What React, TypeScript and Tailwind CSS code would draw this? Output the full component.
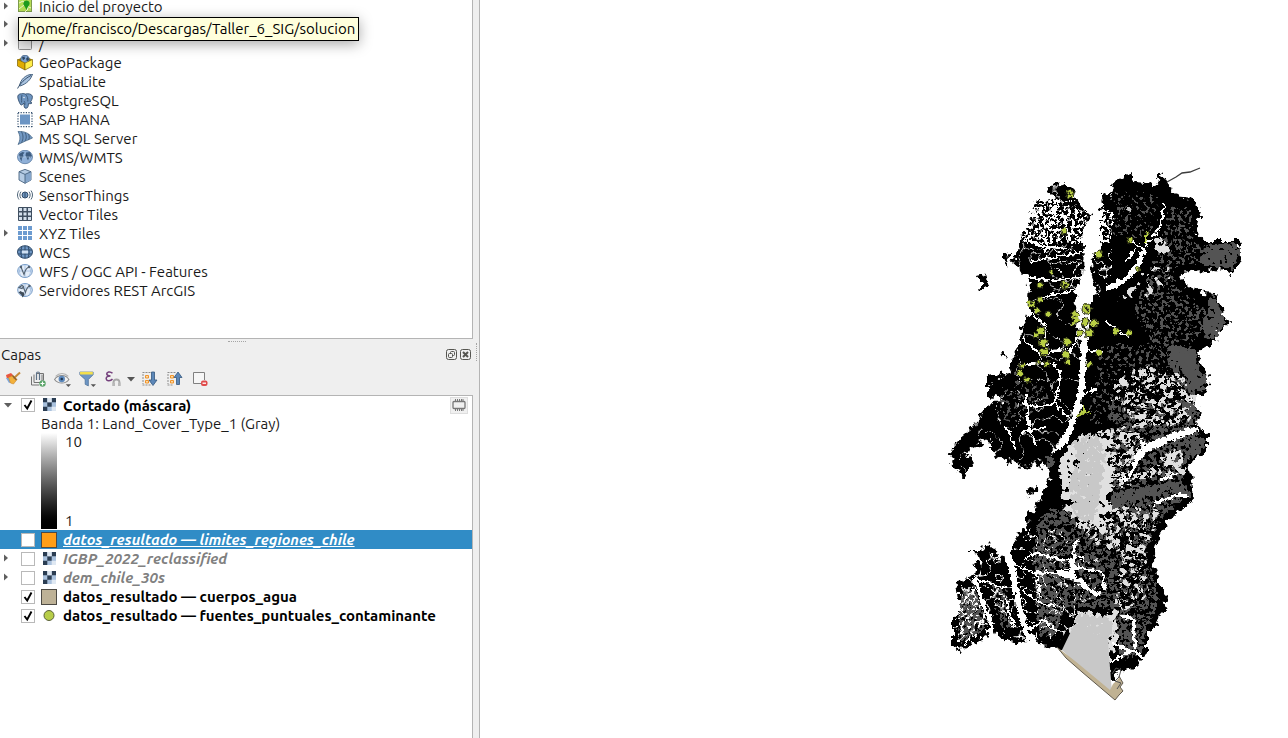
import type { ReactNode } from "react";

/* ---------- Icons ---------- */

function Icon({ children, size = 16 }: { children: ReactNode; size?: number }) {
  return (
    <svg width={size} height={size} viewBox="0 0 16 16" fill="none" className="block shrink-0" aria-hidden="true">
      {children}
    </svg>
  );
}

const ProjectHomeIcon = () => (
  <Icon>
    <rect x="1.5" y=".5" width="13" height="13" fill="#b5dc55" stroke="#7d9a4d" />
    <path d="M2 5l4-2 5 8-3 3M2 11l5-4 7 3" stroke="#eef5cf" />
    <path d="M9.500 12C8 8 5.800 7 6.500 4.500a3.200 3.200 0 016 0c.6 2.500-1.800 3.500-3 7.500z" fill="#1e9a1e" />
  </Icon>
);
const FolderIcon = () => (
  <Icon>
    <path d="M2 2.500h4l1 1.500h7v9.500H2z" fill="#ededed" stroke="#8f8f8f" />
  </Icon>
);
const DriveIcon = () => (
  <Icon>
    <rect x="1.500" y="1.500" width="13" height="12" rx="1" fill="#efefef" stroke="#8f8f8f" />
  </Icon>
);
const GeoPackageIcon = () => (
  <Icon>
    <path d="M.5 4.500L8 1.500l7.500 3L8 8.500z" fill="#a07d00" />
    <circle cx="8" cy="4.300" r="4.200" fill="#7fa3cf" stroke="#35506f" strokeWidth=".7" />
    <path d="M5 2.300l2.500-.8L8 3.800 6 5.300zM9 3.800l2-2 1 3-2 1.500z" fill="#2c4663" />
    <path d="M.5 4.500L8 8v7L.5 11z" fill="#e0ac00" stroke="#7d6200" strokeWidth=".7" />
    <path d="M15.500 4.500L8 8v7l7.500-4z" fill="#ffee4a" stroke="#7d6200" strokeWidth=".7" />
  </Icon>
);
const FeatherIcon = () => (
  <Icon>
    <path d="M2.500 12C3.500 5.500 8 1 15.500 0 14 5.500 9.500 10 3 12z" fill="#a9c3e0" stroke="#3b5876" strokeWidth=".9" />
    <path d="M.6 14.500C3 9.500 8 4.500 14 1.500" stroke="#314c69" />
  </Icon>
);
const PostgresIcon = () => (
  <Icon>
    <path d="M4.500.8c2-.6 3 0 4 .3 2-.7 6-.5 6.800 2 .5 2-.8 4.500-2 6l1.700.8c-1.200 1-2.500.9-3.500.6-.3 2-.2 4.500-2.300 4.700-2 .3-2.300-1.500-2.200-5C5.500 11 4.500 13 3.500 11.500 2 9 .5 5 .8 3.200 1.200 1.300 3 .8 4.500.8z" fill="#6e94bf" stroke="#35506f" strokeWidth=".9" />
    <path d="M5 2C4 5 5 7 4.500 9.500M8.500 1.500c2 1.500 2.500 4 2.300 7M7 8c1 1 1 2 .8 4" stroke="#35506f" strokeWidth=".8" />
    <circle cx="7" cy="4.500" r=".7" fill="#fff" />
  </Icon>
);
const HanaIcon = () => (
  <Icon>
    <rect x="3" y="2.500" width="10" height="10" fill="#6c95c4" />
    <path d="M1 .6h14.500M1 14.600h14.500M1 1v14M15 1v14" stroke="#35506f" strokeWidth="1.200" strokeDasharray="1.200 1.400" />
  </Icon>
);
const MssqlIcon = () => (
  <Icon>
    <path d="M1 .5C7 0 12 2 15.500 7 11 9 6 11 1 13.500 3.500 9 3.500 5 1 .5z" fill="#7399c4" stroke="#42617f" strokeWidth=".7" />
    <path d="M4.500.7c2 4 2 7 0 11M8 1.500c1.700 3 1.700 6 0 8.600M11.500 3c1 2.500 1 4 0 5.700" stroke="#35506f" strokeWidth=".8" />
  </Icon>
);
const GlobeIcon = () => (
  <Icon>
    <ellipse cx="8" cy="7" rx="7.500" ry="6.700" fill="#8fb0d8" stroke="#5a7ba1" strokeWidth=".8" />
    <path d="M2 4l3.500-2 2 .5L6 4.500l.5 2L5 8l-.5 3.500L3 8.500zM9 2.500l4-.5 2 4-1.500 2-1-1.500-1.500 4-1.500-3L8.500 5.500z" fill="#3d5c80" />
    <path d="M1 7h14" stroke="#c6d9ee" strokeWidth=".5" />
  </Icon>
);
const CubeIcon = () => (
  <Icon>
    <path d="M8 .4l6 2.300v8.300L8 14.300 2 11V2.700z" fill="#b5cbe3" stroke="#46627f" strokeWidth=".9" />
    <path d="M8 5.400l6-2.700V11l-6 3.300z" fill="#86a6cb" />
    <path d="M2 2.700l6 2.700 6-2.700M8 5.400v9" stroke="#46627f" strokeWidth=".9" />
  </Icon>
);
const SensorIcon = () => (
  <Icon>
    <circle cx="8" cy="7" r="3" fill="#6e94bf" stroke="#314c69" />
    <path d="M8 4.500v5" stroke="#314c69" />
    <path d="M4 3.700c-1.500 2-1.500 4.600 0 6.600M2 2.500c-2 2.800-2 6.200 0 9M12 3.700c1.500 2 1.500 4.600 0 6.600M14 2.500c2 2.800 2 6.200 0 9" stroke="#4f6579" />
  </Icon>
);
const VectorTilesIcon = () => (
  <Icon>
    <rect x="1" y="0" width="14" height="14" rx="1" fill="#3f4f61" />
    {[2, 6.5, 11].map((x) => [1, 5.5, 10].map((y) => <rect key={`${x}-${y}`} x={x} y={y} width="3" height="3" fill="#d3dfec" />))}
  </Icon>
);
const XyzIcon = () => (
  <Icon>
    {[1, 6, 11].map((x) => [0, 5, 10].map((y) => <rect key={`${x}-${y}`} x={x} y={y} width="4" height="4" fill="#6c9bd0" />))}
  </Icon>
);
const WcsIcon = () => (
  <Icon>
    <ellipse cx="8" cy="7" rx="7.500" ry="6.300" fill="#6f97c5" stroke="#2f4a68" />
    <path d="M1 5h14M1 9h14M8 1v12M5 1.500c-1.500 3.500-1.500 7.500 0 11M11 1.500c1.500 3.500 1.500 7.500 0 11" stroke="#2f4a68" />
    <rect x="5" y="5.500" width="6" height="3" fill="#cfe0f2" />
  </Icon>
);
const WfsIcon = () => (
  <Icon>
    <ellipse cx="8" cy="7" rx="7.300" ry="6.500" fill="#e4edf8" stroke="#6f97c5" />
    <path d="M1 7h14M8 .5v13M4 2c-2 3-2 7 0 10M12 2c2 3 2 7 0 10" stroke="#9dbbe0" strokeWidth=".8" />
    <path d="M4 3l3 7.500c1-4 2-6.500 5-7.500" stroke="#51606f" strokeWidth="1.100" />
    <circle cx="4" cy="3" r="1.200" fill="#51606f" />
    <circle cx="12" cy="3" r="1.200" fill="#51606f" />
  </Icon>
);
const ArcgisIcon = () => (
  <Icon>
    <ellipse cx="8" cy="7" rx="7.300" ry="6.500" fill="#e4edf8" stroke="#6f97c5" />
    <path d="M2 5h13M8 .5v13M12 2c2 3 2 7 0 10" stroke="#9dbbe0" strokeWidth=".8" />
    <path d="M2 4.500l3-2 1.500 1-1.500 2zM6 3.500l2.500 6c.8-3.500 2-5.500 4-6.500" stroke="#51606f" strokeWidth="1.100" />
    <circle cx="12.500" cy="3" r="1.200" fill="#51606f" />
    <path d="M1.500 9.500l2-1.500L5 9l2 .5.500 2.500-2 2.500L4.500 12z" fill="#3f4c59" />
  </Icon>
);
const RasterIcon = () => (
  <Icon>
    <rect x="2" y="1" width="13" height="13" fill="#a9c1dd" />
    <path d="M2 1h4.300v4.300H2zM10.700 1H15v4.300h-4.300zM6.300 5.300h4.400v4.400H6.300zM2 9.700h4.300V14H2z" fill="#2b3d52" />
    <path d="M6.300 1h4.400v4.300H6.300zM10.700 9.700H15V14h-4.300z" fill="#dfe8f2" />
  </Icon>
);

const StyleIcon = () => (
  <Icon>
    <path d="M1 4l5-2 2 2-1 3-5 1z" fill="#e9573f" />
    <path d="M1 7h3l3 4-3 1z" fill="#7ba5dc" />
    <path d="M3.500 6.500L8 4.500l4 4L8.500 13l-3-1z" fill="#f3b13b" stroke="#c9852b" strokeWidth=".6" />
    <path d="M8.500 7.500L15 1.500" stroke="#c58b3a" strokeWidth="2" />
    <path d="M7.500 4.500l4 4.500" stroke="#8a6130" strokeWidth="1.300" />
  </Icon>
);
const AddGroupIcon = () => (
  <Icon>
    <path d="M1.500 5.500v8.500h7.500M4 3.500V11.500h8V3.500M6.500 2.500h7v7" stroke="#737373" />
    <path d="M6.500 9V2.500a1.500 1.500 0 013 0V9" stroke="#5f7389" strokeWidth="1.200" />
    <circle cx="12.500" cy="12.500" r="3.200" fill="#5aa469" />
    <path d="M12.500 10.500v4M10.500 12.500h4" stroke="#fff" strokeWidth="1.200" />
  </Icon>
);
const EyeIcon = () => (
  <Icon size={17}>
    <path d="M.5 8C4 3 11 3 14 8c-3 4.500-10 4.500-13.500 0z" fill="#f2f2f2" stroke="#8b8b8b" />
    <path d="M1.500 5C5 1.500 10 1.500 13.500 5" stroke="#b0b0b0" />
    <circle cx="7.300" cy="7.500" r="3" fill="#5e8abd" />
    <circle cx="7.300" cy="7.500" r="1.200" fill="#1f3550" />
    <path d="M11 12.500h5L13.500 15z" fill="#555" />
  </Icon>
);
const FilterIcon = () => (
  <Icon size={17}>
    <path d="M.8 1h12.500v2.500L8.800 8v6l-3-1.500V8L.8 3.500z" fill="#6d96c5" stroke="#4b6e96" strokeWidth=".7" />
    <path d="M1 .8h12v2.500H1z" fill="#f3df4c" />
    <path d="M11 12.500h5L13.500 15z" fill="#555" />
  </Icon>
);
const ExpressionIcon = () => (
  <Icon>
    <path d="M7.500 2.300C5-.2 1.500 1 1.800 3.200 2 4.600 3.300 5 5.500 5 3 5 1 5.800 1.200 7.800 1.500 10.300 5.500 10.500 7.500 8" stroke="#74407c" strokeWidth="1.500" />
    <path d="M8.500 15v-3.500c0-4 6-4 6 0V15" stroke="#a7a7a7" strokeWidth="1.800" />
    <path d="M7.500 11.500h2.500V15H7.500zM13 11.500h2.500V15H13z" fill="#b8b8b8" />
  </Icon>
);
const ExpandIcon = () => (
  <Icon>
    <path d="M.5 1.500h9M.5 14h9M1 3v10" stroke="#8d8d8d" strokeDasharray="2 1" />
    <path d="M3.500 4.500h3v2.500h-3zM3.500 9.500h3V12h-3z" stroke="#f0952c" fill="#fbd9a8" />
    <path d="M9.500 1h3v8H15l-4 5.500L7 9h2.500z" fill="#5c87b8" stroke="#35587f" strokeWidth=".8" />
  </Icon>
);
const CollapseIcon = () => (
  <Icon>
    <path d="M.5 1.500h9M.5 14h6M1 3v10" stroke="#8d8d8d" strokeDasharray="2 1" />
    <path d="M3.500 4.500h3v2.500h-3zM3.500 9.500h3V12h-3z" stroke="#f0952c" fill="#fbd9a8" />
    <path d="M9.500 13.500h3V6.500H15L11 1 7 6.500h2.500z" fill="#5c87b8" stroke="#35587f" strokeWidth=".8" />
  </Icon>
);
const RemoveIcon = () => (
  <Icon>
    <path d="M9 12.500H1.500v-11h11v7.500" fill="#f6f6f6" stroke="#808080" />
    <rect x="9" y="9.500" width="6.500" height="5.500" rx="2" fill="#e04b4b" />
    <path d="M10.500 12.200H14" stroke="#fff" strokeWidth="1.300" />
  </Icon>
);

/* ---------- Data ---------- */

const browserItems = [
  { label: "Inicio del proyecto", icon: <ProjectHomeIcon />, expandable: true, first: true },
  { label: "Inicio", icon: <FolderIcon />, expandable: true, covered: true },
  { label: "/", icon: <DriveIcon />, expandable: true },
  { label: "GeoPackage", icon: <GeoPackageIcon /> },
  { label: "SpatiaLite", icon: <FeatherIcon /> },
  { label: "PostgreSQL", icon: <PostgresIcon /> },
  { label: "SAP HANA", icon: <HanaIcon /> },
  { label: "MS SQL Server", icon: <MssqlIcon /> },
  { label: "WMS/WMTS", icon: <GlobeIcon /> },
  { label: "Scenes", icon: <CubeIcon /> },
  { label: "SensorThings", icon: <SensorIcon /> },
  { label: "Vector Tiles", icon: <VectorTilesIcon /> },
  { label: "XYZ Tiles", icon: <XyzIcon />, expandable: true },
  { label: "WCS", icon: <WcsIcon /> },
  { label: "WFS / OGC API - Features", icon: <WfsIcon /> },
  { label: "Servidores REST ArcGIS", icon: <ArcgisIcon /> },
];

const swatch = (color: string) => (
  <Icon>
    <rect x=".5" y=".5" width="15" height="15" fill={color} stroke="#4d4a44" />
  </Icon>
);

type Layer = { name: string; checked: boolean; icon: ReactNode; tone: string; row?: string; expandable?: boolean };

const layers: Layer[] = [
  { name: "datos_resultado — limites_regiones_chile", checked: false, icon: swatch("#ff9e17"), tone: "italic text-white underline", row: "bg-[#308cc6]" },
  { name: "IGBP_2022_reclassified", checked: false, icon: <RasterIcon />, tone: "italic text-[#808080]", expandable: true },
  { name: "dem_chile_30s", checked: false, icon: <RasterIcon />, tone: "italic text-[#808080]", expandable: true },
  { name: "datos_resultado — cuerpos_agua", checked: true, icon: swatch("#beb297"), tone: "text-black" },
  {
    name: "datos_resultado — fuentes_puntuales_contaminante",
    checked: true,
    icon: (
      <Icon>
        <circle cx="8" cy="7.500" r="5" fill="#b7cd48" stroke="#5a6138" />
      </Icon>
    ),
    tone: "text-black",
  },
];

const tools = [
  { label: "Abrir el panel de estilo", icon: <StyleIcon /> },
  { label: "Añadir grupo", icon: <AddGroupIcon /> },
  { label: "Administrar temas de mapa", icon: <EyeIcon /> },
  { label: "Filtrar leyenda", icon: <FilterIcon /> },
  { label: "Filtrar por expresión", icon: <ExpressionIcon /> },
];
const treeTools = [
  { label: "Expandir todo", icon: <ExpandIcon /> },
  { label: "Contraer todo", icon: <CollapseIcon /> },
  { label: "Eliminar capa", icon: <RemoveIcon /> },
];

/* ---------- Tree parts ---------- */

function Expander({ visible, open = false, label }: { visible?: boolean; open?: boolean; label: string }) {
  if (!visible) return <span className="w-4 shrink-0" />;
  return (
    <button type="button" aria-label={label} aria-expanded={open} className="flex h-3 w-4 shrink-0 items-center pl-[3px]">
      <svg width="10" height="9" viewBox="0 0 10 9" aria-hidden="true">
        <path d={open ? "M1 2h8L5 6.500z" : "M1 .5v7L5 4z"} fill="#5f5f5f" />
      </svg>
    </button>
  );
}

function Tick({ id, checked }: { id: string; checked: boolean }) {
  return (
    <span className="grid h-[14px] w-[14px] shrink-0">
      <input id={id} type="checkbox" defaultChecked={checked} className="peer col-start-1 row-start-1 h-[14px] w-[14px] appearance-none border border-[#b9b9b9] bg-white" />
      <svg viewBox="0 0 14 14" className="pointer-events-none invisible col-start-1 row-start-1 peer-checked:visible" aria-hidden="true">
        <path d="M3.500 7l2.700 3.500 4.300-8" fill="none" stroke="#000" strokeWidth="1.900" />
      </svg>
    </span>
  );
}

/* ---------- Map ---------- */

function rgb(hex: string) {
  return [1, 3, 5].map((i) => parseInt(hex.slice(i, i + 2), 16) / 255);
}
function alphaTo(hex: string, gain: number, offset: number) {
  const [r, g, b] = rgb(hex);
  return `0 0 0 0 ${r} 0 0 0 0 ${g} 0 0 0 0 ${b} 0 0 0 ${gain} ${offset}`;
}
const region = { filterUnits: "userSpaceOnUse" as const, x: 930, y: 150, width: 340, height: 570, colorInterpolationFilters: "sRGB" };

/* Fills a shape with hard-edged noise; the shape's opacity sets the density. */
function Speckle({ id, color, freq, seed, blur = 2 }: { id: string; color: string; freq: string; seed: number; blur?: number }) {
  return (
    <filter id={id} {...region}>
      <feTurbulence type="fractalNoise" baseFrequency={freq} numOctaves={3} seed={seed} />
      <feColorMatrix values={alphaTo("#000000", 1, 0)} result="noise" />
      <feGaussianBlur in="SourceAlpha" stdDeviation={blur} result="shape" />
      <feComposite in="noise" in2="shape" operator="arithmetic" k1={0} k2={0.5} k3={0.5} k4={0} />
      <feColorMatrix values={alphaTo(color, 60, -36)} />
    </filter>
  );
}

/* Draws thin meandering lines inside a shape. */
function Veins({ id, color, freq, seed, width }: { id: string; color: string; freq: string; seed: number; width: number }) {
  return (
    <filter id={id} {...region}>
      <feTurbulence type="turbulence" baseFrequency={freq} numOctaves={1} seed={seed} />
      <feColorMatrix values={alphaTo(color, -30, width)} result="lines" />
      <feTurbulence type="fractalNoise" baseFrequency=".25" numOctaves={2} seed={seed + 1} result="wobble" />
      <feDisplacementMap in="lines" in2="wobble" scale={5} xChannelSelector="R" yChannelSelector="G" />
      <feComposite in2="SourceAlpha" operator="in" />
    </filter>
  );
}

function Rough({ id, scale, freq, seed }: { id: string; scale: number; freq: string; seed: number }) {
  return (
    <filter id={id} {...region}>
      <feTurbulence type="fractalNoise" baseFrequency={freq} numOctaves={3} seed={seed} result="wobble" />
      <feDisplacementMap in="SourceGraphic" in2="wobble" scale={scale} xChannelSelector="R" yChannelSelector="A" />
    </filter>
  );
}

const westNorth =
  "1046,190 1050,186 1065,183 1074,192 1078,203 1090,215 1084,225 1083,243 1082,277 1074,290 1077,303 1074,316 1078,332 1083,345 1081,380 1077,413 1067,433 1055,447 1050,457 1035,466 1020,464 1003,459 990,452 990,440 978,446 966,452 974,466 961,476 950,463 952,445 970,430 983,410 1005,398 987,396 987,377 1010,371 1012,357 1021,345 1022,325 1031,312 1028,300 1029,286 1025,273 1012,262 1020,246 1028,223 1035,203 1054,198";
const east =
  "1103,196 1110,192 1117,180 1132,172 1134,182 1157,184 1160,172 1167,183 1177,197 1195,199 1200,210 1197,230 1203,241 1237,241 1243,253 1232,275 1220,268 1203,271 1181,273 1184,285 1203,293 1215,294 1228,323 1215,334 1218,340 1202,347 1198,363 1208,377 1206,392 1190,399 1202,412 1197,426 1207,434 1207,452 1188,463 1192,487 1193,502 1177,512 1163,527 1153,553 1157,577 1168,600 1157,625 1148,634 1148,654 1133,669 1118,672 1110,682 1057,647 1040,645 1032,633 1023,643 1005,640 992,633 983,640 957,650 953,647 953,620 960,607 957,583 973,577 977,560 1007,557 1014,545 1020,531 1029,528 1026,518 1040,500 1050,478 1042,462 1058,450 1068,436 1078,414 1083,385 1085,350 1086,318 1092,300 1097,290 1092,277 1091,260 1101,247 1101,217";
const islands = [
  "970,551 980,551 986,545 996,547 998,555 985,560 975,554",
  "978,274 985,272 989,285 982,289",
  "1003,252 1009,255 1008,265 1003,261",
  "1027,489 1038,484 1037,489 1028,496",
  "999,352 1006,354 1008,360",
  "1016,463 1030,466 1031,470 1017,468",
];
const greyLobes = [
  "1205,243 1237,241 1243,253 1232,275 1222,268 1207,270 1196,262 1202,252",
  "1205,293 1216,294 1228,323 1215,341 1203,340 1200,322 1208,310",
  "1176,352 1198,349 1200,366 1208,377 1206,392 1198,394 1190,378 1178,366",
  "1180,438 1206,434 1207,450 1190,461 1188,448",
  "1190,399 1202,412 1199,420 1184,408 1168,398",
  "1110,492 1150,484 1178,480 1192,488 1192,500 1170,492 1140,502 1110,512",
  "1012,380 1022,379 1024,388 1016,388",
  "1042,455 1056,455 1056,466 1046,470",
];
const channels: [string, number][] = [
  ["M1086 300L1087 318 1085 335 1083 363 1081 393 1076 411 1068 434 1058 449", 6],
  ["M1107 289L1127 278 1138 265 1144 249", 5],
  ["M1144 249L1162 224 1164 203M1144 249L1130 240M1126 262L1136 249", 2],
  ["M1105 322L1118 330 1129 337M1085 350L1103 352M1083 395L1097 388", 2],
  ["M1135 460L1147 448 1170 438 1197 428", 7],
  ["M1136 458L1133 470 1127 479 1118 480M1140 440L1147 449", 2],
  ["M1154 504L1177 495 1188 496M1160 480L1178 474", 3],
  ["M974 577L983 603 991 622 991 640", 4],
  ["M1007 553L1012 570 1017 593 1022 617 1029 640", 6],
  ["M1013 563L1033 573 1057 573 1073 567 1103 572 1104 590", 2],
  ["M1057 572L1074 577 1087 588 1099 596M1072 560L1072 578", 5],
  ["M1023 560L1037 553 1060 560 1083 558M1074 558L1074 545 1079 540", 2],
  ["M977 580L1007 588M1022 590L1040 603 1055 606M1027 631L1043 620 1058 632M1037 573L1040 595M1006 598L1009 612 1016 627", 2],
  ["M1120 615L1133 619 1135 648M1112 663L1124 654 1135 651 1146 660M1112 643L1133 652", 3],
  ["M1022 403L1033 407 1050 406 1058 396 1060 372 1052 362M1025 395L1030 430 1020 433M1030 430L1045 427M1030 430L1036 446M1006 425L1016 450M1056 403L1068 418", 2],
  ["M1030 262L1050 258 1083 252M1027 277L1055 281 1082 276M1040 298L1074 290M1058 200L1048 225 1045 252M1064 215L1070 240M1027 240L1045 247 1068 248", 2],
  ["M1023 338L1040 355 1068 348M1030 312L1045 325 1048 345M1078 338L1066 356M1020 366L1050 362", 2],
];
const sources: [number, number, number][] = [
  [1070, 194, 4], [1064, 231, 3], [1099, 254, 4], [1130, 240, 3], [1138, 269, 2], [1051, 272, 2], [1040, 285, 3], [1065, 285, 4],
  [1031, 304, 4], [1040, 300, 3], [1048, 314, 3], [1037, 311, 3], [1087, 309, 5], [1075, 315, 4], [1076, 320, 3], [1085, 322, 4],
  [1094, 323, 4], [1041, 331, 4], [1036, 336, 3], [1043, 343, 4], [1044, 352, 4], [1067, 342, 4], [1080, 333, 3], [1089, 333, 4],
  [1116, 331, 3], [1129, 333, 3], [1066, 355, 4], [1068, 362, 3], [1022, 366, 3], [1020, 373, 3], [1047, 364, 3], [1038, 362, 2],
  [1027, 380, 3], [1099, 353, 3], [1089, 364, 3],
];

function MapCanvas() {
  return (
    <svg className="block h-full w-full bg-white" role="img" aria-label="Mapa de cobertura del suelo">
      <defs>
        <Rough id="coast" scale={13} freq=".16" seed={4} />
        <Rough id="edge" scale={7} freq=".2" seed={9} />
        <Rough id="dots" scale={5} freq=".3" seed={14} />
        <Speckle id="grey" color="#545454" freq=".28" seed={3} />
        <Speckle id="solidGrey" color="#545454" freq=".25" seed={8} blur={2} />
        <Speckle id="black" color="#000000" freq=".2" seed={12} />
        <Speckle id="pale" color="#e0e0e0" freq=".15" seed={21} blur={3} />
        <Speckle id="ice" color="#c8c8c8" freq=".22" seed={31} blur={3} />
        <Speckle id="water" color="#ffffff" freq=".28" seed={41} blur={1} />
        <Veins id="fjords" color="#ffffff" freq=".05" seed={6} width={0.8} />
        <Veins id="creeks" color="#ffffff" freq=".08" seed={16} width={1.2} />
        <Veins id="ridges" color="#000000" freq=".1 .09" seed={26} width={2.2} />
      </defs>
      <g transform="translate(-480 0)">
        <g filter="url(#coast)">
          <polygon points={westNorth} />
          <polygon points={east} />
          {islands.map((p) => (
            <polygon key={p} points={p} />
          ))}
        </g>

        <g filter="url(#grey)">
          <polygon opacity=".66" points="1165,205 1194,204 1196,240 1226,250 1216,264 1174,270 1180,288 1205,304 1212,323 1196,343 1150,345 1130,310 1148,270 1160,240" />
          <polygon opacity=".62" points="1100,340 1196,345 1196,400 1150,400 1095,430 1085,420 1092,380" />
          <polygon opacity=".78" points="1168,345 1196,348 1202,388 1190,396 1170,380" />
          <polygon opacity=".78" points="1110,400 1196,402 1202,448 1185,468 1188,498 1161,522 1149,555 1162,600 1150,628 1144,654 1120,664 1110,610 1065,610 1058,640 1037,638 1030,560 1036,520 1050,505 1110,520" />
          <polygon opacity=".82" points="960,590 978,588 988,625 980,636 958,645 957,615" />
          <polygon opacity=".68" points="985,575 1008,585 1018,630 1000,632 990,600" />
          <polygon opacity=".62" points="1000,385 1045,380 1055,400 1020,425 990,425" />
          <polygon opacity=".6" points="1110,190 1160,190 1160,240 1110,240" />
        </g>

        <g filter="url(#pale)">
          <polygon opacity=".8" points="1152,238 1163,228 1172,248 1166,258 1152,254" />
          <polygon opacity=".6" points="1150,262 1170,262 1175,285 1130,310 1108,312 1120,290" />
          <polygon opacity=".76" points="1112,374 1150,362 1186,374 1199,400 1192,424 1160,430 1140,425 1110,404" />
          <polygon opacity=".76" points="1090,430 1140,420 1150,445 1130,470 1150,465 1170,445 1188,450 1190,480 1150,480 1100,500" />
          <polygon opacity=".72" points="1098,500 1162,505 1160,525 1148,550 1152,590 1132,618 1110,612 1118,560 1070,530" />
          <polygon opacity=".83" points="1068,442 1080,432 1098,432 1110,450 1110,490 1102,520 1082,528 1062,512 1058,478 1054,464" />
          <polygon opacity=".86" points="1072,608 1118,612 1120,640 1110,672 1112,690 1066,650" />
        </g>

        <g filter="url(#black)">
          <polygon opacity=".63" points="1100,365 1190,375 1190,430 1140,425 1100,430" />
          <polygon opacity=".63" points="1110,432 1160,430 1180,470 1160,500 1110,500" />
          <polygon opacity=".64" points="1045,520 1160,515 1152,560 1160,600 1140,640 1116,605 1050,605" />
        </g>
        <polygon filter="url(#ridges)" points="1100,365 1180,365 1194,410 1180,430 1140,440 1130,460 1160,470 1180,480 1160,520 1150,560 1155,600 1140,640 1116,620 1112,530 1110,430 1092,420" />

        <g filter="url(#solidGrey)">
          {greyLobes.map((p) => (
            <polygon key={p} opacity=".88" points={p} />
          ))}
        </g>

        <g filter="url(#ice)">
          <polygon opacity=".92" points="1068,444 1080,434 1097,432 1108,452 1104,486 1096,522 1084,526 1070,512 1066,480 1076,462" />
          <polygon opacity=".95" points="1074,610 1113,616 1116,632 1107,645 1113,668 1112,690 1062,650 1070,632" />
          <polygon opacity="1" points="1122,204 1134,205 1133,213 1123,213" />
          <polygon opacity=".9" points="1105,299 1116,303 1113,312" />
        </g>
        <path d="M1074 625L1108 640 1110 668 1112 692 1080 668 1062 650z" fill="#c8c8c8" />

        <polygon filter="url(#fjords)" points={westNorth} />
        <polygon filter="url(#creeks)" points="1020,200 1090,200 1085,290 1060,290 1045,250 1020,250" />
        <polygon filter="url(#creeks)" points="953,575 1030,528 1060,530 1100,560 1090,600 1060,640 953,650" />
        <polygon filter="url(#creeks)" points="1095,190 1112,190 1112,280 1098,300 1090,290" />
        <g filter="url(#water)">
          <polygon opacity=".67" points="1028,195 1060,198 1088,215 1082,245 1022,245" />
          <polygon opacity=".65" points="1098,205 1116,212 1112,245 1098,245" />
          <polygon opacity=".58" points="955,590 985,585 990,640 955,650" />
        </g>
        <g filter="url(#edge)" fill="none" stroke="#fff" strokeLinejoin="round" shapeRendering="crispEdges">
          {channels.map(([d, w]) => (
            <path key={d} d={d} strokeWidth={w} />
          ))}
        </g>

        <g filter="url(#dots)">
          {sources.map(([x, y, r]) => (
            <circle key={`${x}-${y}`} cx={x} cy={y} r={r} fill="#b9cf45" stroke="#2c3016" strokeWidth="1" />
          ))}
          <path d="M1077 418L1081 413 1090 412M1084 412V405M1146 243V236L1148 232M1072 325L1079 318" fill="none" stroke="#b9cf45" strokeWidth="2" />
          <path d="M1041 334V340M1062 348l3 4M1082 326l4 3M1064 284l2 4M1068 192l3 3M1030 303l3 1M1086 307l2 4" stroke="#1c1f10" strokeWidth="2" />
        </g>

        <path d="M1057 647L1075 661 1110 690 1113 684 1119 678 1119 676 1123 683 1120 687 1123 691 1119 695 1115 700 1082 672 1066 658z" fill="#c0b293" />
        <path d="M1057 647L1066 658 1082 672 1115 700 1119 695 1123 691 1120 687 1123 683 1119 676" fill="none" stroke="#5e584c" />
        <path d="M1112 674l4-6 5 2-2 7-4 4 6 2-4 6" fill="none" stroke="#545454" />
        <path d="M1167 182L1176 177 1182 173 1190 172 1200 168" fill="none" stroke="#3c3c3c" strokeWidth="1.300" />
      </g>
    </svg>
  );
}

/* ---------- Page ---------- */

export default function App() {
  return (
    <div className="flex h-screen min-h-[640px] w-full overflow-hidden bg-[#efefef] font-['Ubuntu','Noto_Sans',sans-serif] text-[15px] leading-[19px] text-[#1a1a1a]">
      <aside className="relative flex w-[473px] shrink-0 flex-col">
        <section aria-label="Navegador" className="h-[339px] shrink-0 overflow-hidden border-r border-b border-[#b4b4b4] bg-white">
          <ul>
            {browserItems.map((item) => (
              <li key={item.label} className={item.first ? "flex h-[15px] items-start leading-[13px]" : "flex h-[19px] items-center"}>
                <Expander visible={item.expandable} label={`Expandir ${item.label}`} />
                <span className={item.first ? "-mt-[2px] ml-px" : "ml-px"}>{item.icon}</span>
                {!item.covered && <span className="ml-[6px] whitespace-nowrap">{item.label}</span>}
              </li>
            ))}
          </ul>
        </section>
        <div role="tooltip" className="absolute top-[17px] left-[18px] flex h-[24px] items-start border border-black bg-[#ffffdc] px-[3px] pt-px whitespace-nowrap text-black shadow-[0_3px_14px_rgba(0,0,0,0.35)]">
          /home/francisco/Descargas/Taller_6_SIG/solucion
        </div>

        <div className="flex h-[6px] justify-center" aria-hidden="true">
          <span className="mt-[2px] h-px w-[18px] border-t border-dotted border-[#a5a5a5]" />
        </div>

        <header className="flex h-[19px] items-center gap-[3px] pr-[2px] pl-px">
          <h2 className="flex-1">Capas</h2>
          <button type="button" aria-label="Panel flotante">
            <svg width="11" height="11" viewBox="0 0 11 11" fill="none" stroke="#555550" aria-hidden="true">
              <rect x=".5" y=".5" width="10" height="10" rx="2" />
              <rect x="4.500" y="2.500" width="4" height="4" rx="1" />
              <rect x="2.500" y="4.500" width="4" height="4" rx="1" fill="#efefef" />
            </svg>
          </button>
          <button type="button" aria-label="Cerrar panel">
            <svg width="11" height="11" viewBox="0 0 11 11" fill="none" stroke="#555550" aria-hidden="true">
              <rect x=".5" y=".5" width="10" height="10" rx="2" />
              <path d="M3 3l5 5M8 3L3 8" strokeWidth="2" />
            </svg>
          </button>
        </header>

        <div role="toolbar" aria-label="Capas" className="flex h-[31px] items-center pb-px">
          {tools.map((t) => (
            <button key={t.label} type="button" aria-label={t.label} className="flex w-[25px] items-center justify-center">
              {t.icon}
            </button>
          ))}
          <button type="button" aria-label="Más filtros" className="flex w-[12px] items-center justify-center">
            <svg width="8" height="5" viewBox="0 0 8 5" aria-hidden="true">
              <path d="M0 0h8L4 4.500z" fill="#555" />
            </svg>
          </button>
          {treeTools.map((t) => (
            <button key={t.label} type="button" aria-label={t.label} className="flex w-[25px] items-center justify-center">
              {t.icon}
            </button>
          ))}
        </div>

        <section aria-label="Capas" className="min-h-0 flex-1 overflow-hidden border-t border-r border-[#b4b4b4] bg-white">
          <ul>
            <li>
              <div className="flex h-[18px] items-center">
                <Expander visible open label="Contraer Cortado (máscara)" />
                <span className="ml-[5px]">
                  <Tick id="layer-mask" checked />
                </span>
                <span className="ml-[6px]">
                  <RasterIcon />
                </span>
                <label htmlFor="layer-mask" className="ml-[6px] flex-1 font-bold text-black">
                  Cortado (máscara)
                </label>
                <button type="button" aria-label="Capa temporal" className="mr-[4px] flex h-[17px] w-[18px] items-center justify-center border border-[#dedede] bg-[#f0f0f0]">
                  <svg width="14" height="12" viewBox="0 0 14 12" fill="none" stroke="#777" aria-hidden="true">
                    <path d="M3.500 0v12M5.500 0v12M7.500 0v12M9.500 0v12M11 0v12" />
                    <rect x="1" y="2.500" width="12" height="7" rx="1" fill="#f0f0f0" strokeWidth="1.300" />
                  </svg>
                </button>
              </div>
              <div className="pl-[41px]">
                <p className="h-[19px]">Banda 1: Land_Cover_Type_1 (Gray)</p>
                <div className="flex h-[97px] gap-[8px] pb-px">
                  <div className="w-4 bg-linear-to-b from-white to-black" />
                  <div className="flex flex-col justify-between leading-[17px]">
                    <span>10</span>
                    <span>1</span>
                  </div>
                </div>
              </div>
            </li>
            {layers.map((layer, i) => (
              <li key={layer.name} className={`flex h-[19px] items-center leading-[17px] ${layer.row ?? ""}`}>
                <Expander visible={layer.expandable} label={`Expandir ${layer.name}`} />
                <span className="ml-[5px]">
                  <Tick id={`layer-${i}`} checked={layer.checked} />
                </span>
                <span className="ml-[6px]">{layer.icon}</span>
                <label htmlFor={`layer-${i}`} className={`ml-[6px] pb-px font-bold whitespace-nowrap ${layer.tone}`}>
                  {layer.name}
                </label>
              </li>
            ))}
          </ul>
        </section>
      </aside>

      <div className="flex w-[7px] shrink-0 justify-center border-r border-[#b4b4b4] pt-[343px]" aria-hidden="true">
        <span className="h-[18px] w-px border-l border-dotted border-[#a5a5a5]" />
      </div>

      <main className="min-w-0 flex-1">
        <MapCanvas />
      </main>
    </div>
  );
}
